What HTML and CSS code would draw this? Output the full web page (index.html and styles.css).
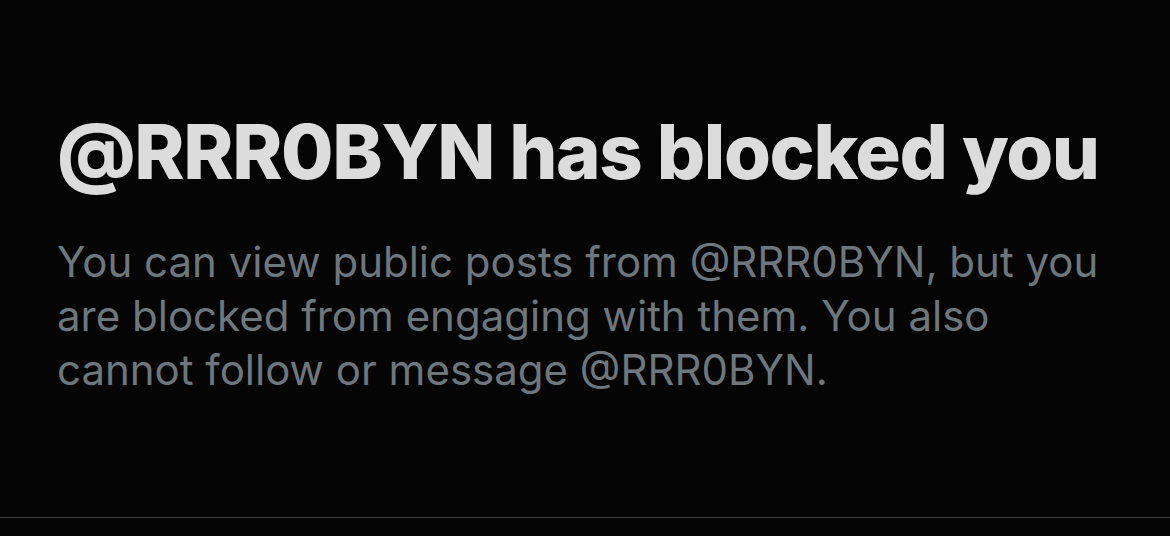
FILE: index.html
```html
<!DOCTYPE html>
<html lang="en">
<head>
    <meta charset="UTF-8">
    <meta name="viewport" content="width=device-width, initial-scale=1.0">
    <title>Blocked</title>
    <link rel="stylesheet" href="styles.css">
</head>
<body>

    <!-- Blocked profile notice -->
    <div class="blocked-notice">
        <h1 class="blocked-title">@RRR0BYN has blocked you</h1>
        <p class="blocked-text">You can view public posts from @RRR0BYN, but you are blocked from engaging with them. You also cannot follow or message @RRR0BYN.</p>
    </div>

    <div class="divider"></div>

</body>
</html>
```
FILE: styles.css
```css
body {
    font-family: Inter, "Noto Sans", Arial, sans-serif;
    background-color: #050505;
    margin: 0;
    padding: 0;
    height: 536px;
    display: flex;
    flex-direction: column;
}
.blocked-notice {
    padding: 107px 40px 0 57px;
    flex: 1;
}
.blocked-title {
    margin: 0;
    font-size: 76px;
    font-weight: 800;
    line-height: 88px;
    color: #dcdcdc;
    letter-spacing: -1.4px;
    white-space: nowrap;
}
.blocked-text {
    margin: 40px 0 0 0;
    width: 1060px;
    font-size: 42px;
    font-weight: 400;
    line-height: 54px;
    color: #6f767c;
}
.divider {
    height: 1px;
    background-color: #3a3a3a;
    margin-bottom: 18px;
}
```
